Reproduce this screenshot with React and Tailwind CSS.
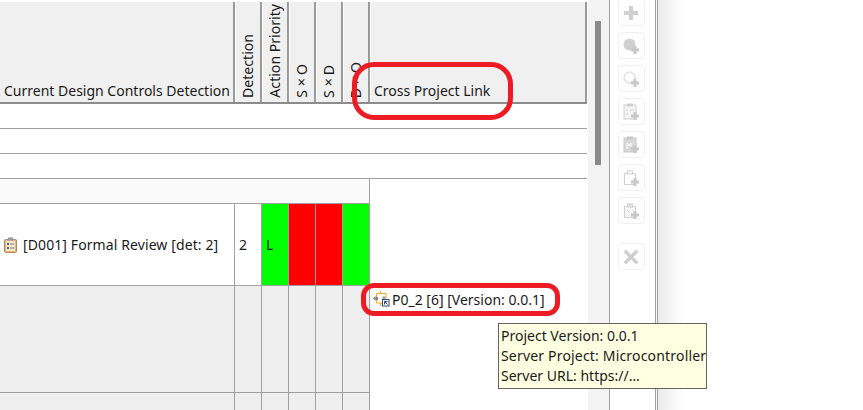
import React from "react";

const font = "font-['Noto_Sans','Open_Sans',sans-serif]";
const lineColor = "border-[#a0a0a0]";

// widths include the 1px right border of each cell
const narrowCols = ["w-[27px]", "w-[27px]", "w-[27px]", "w-[27px]", "w-[27px]"];

function HeaderCell({ label, className = "" }) {
  return (
    <div
      className={`flex items-end border-r-2 border-r-[#9a9a9a] border-l border-l-white ${className}`}
    >
      {label}
    </div>
  );
}

function VerticalLabel({ text, tight }) {
  return (
    <div className="flex h-full w-full items-end justify-center pb-[4px]">
      <span
        className={`rotate-180 whitespace-nowrap text-[14.1px] leading-[20px] text-[#1a1a1a] [writing-mode:vertical-rl] ${
          tight ? "tracking-[-2px]" : ""
        }`}
      >
        {text}
      </span>
    </div>
  );
}

function Header() {
  return (
    <div className="mt-[2px] flex h-[102px] w-[587px] shrink-0 border-b-2 border-b-[#8c8c8c] bg-[#f0f0f0]">
      <HeaderCell
        className="w-[235px] border-l-0 pl-[4px] pb-[1px]"
        label={<span className="whitespace-nowrap text-[14px] leading-[20px] text-[#1a1a1a]">Current Design Controls Detection</span>}
      />
      <HeaderCell className={narrowCols[0]} label={<VerticalLabel text="Detection" />} />
      <HeaderCell className={narrowCols[1]} label={<VerticalLabel text="Action Priority" />} />
      <HeaderCell className={narrowCols[2]} label={<VerticalLabel text="S×O" tight />} />
      <HeaderCell className={narrowCols[3]} label={<VerticalLabel text="S×D" tight />} />
      <HeaderCell className={narrowCols[4]} label={<VerticalLabel text="D×O" tight />} />
      <HeaderCell
        className="flex-1 pl-[3px] pb-[1px]"
        label={<span className="whitespace-nowrap text-[14px] leading-[20px] text-[#1a1a1a]">Cross Project Link</span>}
      />
    </div>
  );
}

function EmptyRow() {
  return <div className={`h-[25px] w-[587px] shrink-0 border-b ${lineColor} bg-white`} />;
}

function ClipboardIcon() {
  return (
    <svg width="13" height="16" viewBox="0 0 13 16" className="shrink-0">
      <rect x="0.5" y="2.5" width="12" height="13" rx="1" fill="#e3b77c" stroke="#b08a58" />
      <rect x="2" y="4" width="9" height="10" fill="#f6e4c8" />
      <rect x="4" y="0.5" width="5" height="3" fill="#8f9bb0" />
      <rect x="3" y="6" width="2" height="2" fill="#44618a" />
      <rect x="3" y="10" width="2" height="2" fill="#44618a" />
      <rect x="6" y="6.5" width="4" height="1" fill="#6d7f9a" />
      <rect x="6" y="10.5" width="4" height="1" fill="#6d7f9a" />
    </svg>
  );
}

function LinkIcon() {
  return (
    <svg width="18" height="16" viewBox="0 0 18 16" className="mt-[-2px] shrink-0">
      <path d="M4.5 2.5h9.5v5M4.5 2.5v9.5h5.5M8.5 0v2.5M8.5 12v3" fill="none" stroke="#f0a818" strokeWidth="1" />
      <path d="M1 7.5l2.5-2.5v5z" fill="#808080" />
      <rect x="3.5" y="6" width="2.5" height="3" fill="#808080" />
      <rect x="10.5" y="5.5" width="3" height="2.5" fill="#9a9a9a" />
      <rect x="10.5" y="8.5" width="6.5" height="6.5" fill="#fff" stroke="#2f4a78" />
      <path d="M12.5 10.5h3M12.5 10.5v3M12.5 10.5l3 3" stroke="#2f4a78" strokeWidth="1" fill="none" />
    </svg>
  );
}

function DetailRow() {
  return (
    <div className="flex h-[82px] shrink-0">
      <div className={`flex w-[370px] border-b ${lineColor} bg-white`}>
        <div className={`flex w-[235px] items-center gap-[6px] border-r ${lineColor} pl-[4px]`}>
          <ClipboardIcon />
          <span className="whitespace-nowrap text-[14px] leading-[20px] tracking-[0.1px] text-[#1a1a1a]">[D001] Formal Review [det: 2]</span>
        </div>
        <div className={`flex w-[27px] items-center border-r ${lineColor} pl-[4px] text-[14px] text-[#1a1a1a]`}>2</div>
        <div className={`flex w-[27px] items-center border-r ${lineColor} bg-[#00ff00] pl-[4px] text-[14px] text-[#1a1a1a]`}>L</div>
        <div className={`w-[27px] border-r ${lineColor} bg-[#ff0000]`} />
        <div className={`w-[27px] border-r ${lineColor} bg-[#ff0000]`} />
        <div className={`w-[27px] border-r ${lineColor} bg-[#00ff00]`} />
      </div>
    </div>
  );
}

function GrayRow({ heightClass, link }) {
  return (
    <div className={`flex shrink-0 ${heightClass}`}>
      <div className={`flex w-[370px] border-b ${lineColor} bg-[#efefef]`}>
        <div className={`w-[235px] border-r ${lineColor}`} />
        {narrowCols.map((w, i) => (
          <div key={i} className={`${w} border-r ${lineColor}`} />
        ))}
      </div>
      {link && (
        <div className="flex h-[28px] items-center gap-[2px] pl-[2px]">
          <LinkIcon />
          <span className="whitespace-nowrap text-[14px] leading-[20px] text-[#1a1a1a]">P0_2 [6] [Version: 0.0.1]</span>
        </div>
      )}
    </div>
  );
}

function ToolButton({ children, className = "" }) {
  return (
    <div className={`flex h-[27px] w-[27px] shrink-0 items-center justify-center rounded-[4px] border border-[#f0f0f0] ${className}`}>
      <svg width="20" height="20" viewBox="0 0 20 20">{children}</svg>
    </div>
  );
}

const Plus = ({ x = 14, y = 14 }) => (
  <path d={`M${x - 1.5} ${y - 4}h3v2.5h2.5v3h-2.5v2.5h-3v-2.5h-2.5v-3h2.5z`} fill="#c8c8c8" />
);

function Toolbar() {
  return (
    <div className="mt-[-1px] flex w-[45px] flex-col items-center gap-[6px] bg-white pr-[3px]">
      <ToolButton>
        <path d="M8 3h4v5h5v4h-5v5H8v-5H3V8h5z" fill="#d0d0d0" />
      </ToolButton>
      <ToolButton>
        <circle cx="8.5" cy="8.5" r="6" fill="#d0d0d0" />
        <Plus />
      </ToolButton>
      <ToolButton>
        <circle cx="8.5" cy="8.5" r="5.5" fill="#fff" stroke="#d0d0d0" />
        <Plus />
      </ToolButton>
      <ToolButton>
        <rect x="3" y="3" width="12" height="14" fill="#f4f4f4" stroke="#d0d0d0" />
        <rect x="6" y="1.5" width="6" height="3" fill="#d0d0d0" />
        <path d="M5 8h2M9 8h4M5 12h2" stroke="#d0d0d0" />
        <Plus />
      </ToolButton>
      <ToolButton>
        <rect x="3" y="3" width="12" height="14" fill="#d8d8d8" stroke="#c8c8c8" />
        <rect x="6" y="1.5" width="6" height="3" fill="#c8c8c8" />
        <path d="M6 14V8l2 3 2-3v4" stroke="#fff" fill="none" />
        <Plus />
      </ToolButton>
      <ToolButton>
        <path d="M3.5 5.5h11v11h-11z" fill="#fff" stroke="#d0d0d0" />
        <rect x="6.5" y="3" width="5" height="3" fill="#fff" stroke="#d0d0d0" />
        <Plus />
      </ToolButton>
      <ToolButton>
        <path d="M3.5 5.5h11v11h-11z" fill="#f6f6f6" stroke="#d0d0d0" />
        <rect x="6.5" y="3" width="5" height="3" fill="#e4e4e4" stroke="#d0d0d0" />
        <path d="M6 9l2 2" stroke="#d0d0d0" />
        <Plus />
      </ToolButton>
      <ToolButton className="mt-[13px]">
        <path d="M5 2.5l5 5 5-5 2.5 2.5-5 5 5 5-2.5 2.5-5-5-5 5-2.5-2.5 5-5-5-5z" fill="#cfcfcf" />
      </ToolButton>
    </div>
  );
}

export default function App() {
  return (
    <div className={`relative flex h-[410px] w-[863px] overflow-hidden bg-white ${font}`}>
      <div className="flex w-[588px] shrink-0 flex-col">
        <Header />
        <EmptyRow />
        <EmptyRow />
        <EmptyRow />
        <div className={`h-[25px] w-[370px] shrink-0 border-b border-r ${lineColor} bg-[#fafafa]`} />
        <DetailRow />
        <GrayRow heightClass="h-[107px]" link />
        <GrayRow heightClass="h-[40px]" />
      </div>

      {/* scrollbar */}
      <div className={`w-[22px] shrink-0 border-r ${lineColor} bg-[#f3f3f3] pl-[7px] pt-[21px]`}>
        <div className="h-[144px] w-[6px] bg-[#8a8a8a]" />
      </div>

      <Toolbar />

      <div className="flex">
        <div className={`w-[3px] border-x ${lineColor} bg-[#f8f8f8]`} />
        <div className="w-[26px] bg-linear-to-r from-[#ebebeb] to-white" />
      </div>

      {/* screenshot annotations */}
      <div className="absolute left-[352px] top-[62px] h-[58px] w-[161px] rounded-[22px] border-[5px] border-[#ed1c24]" />
      <div className="absolute left-[361px] top-[283px] h-[33px] w-[199px] rounded-[13px] border-[5px] border-[#ed1c24]" />

      {/* tooltip */}
      <div className="absolute left-[498px] top-[323px] h-[66px] w-[209px] overflow-hidden whitespace-nowrap border border-[#646464] bg-[#ffffe1] pl-[2px] pt-[2px] text-[14px] leading-[20px] text-[#1a1a1a]">
        <div>Project Version: 0.0.1</div>
        <div className="tracking-[0.18px]">Server Project: Microcontroller-</div>
        <div>Server URL: https://…</div>
      </div>
    </div>
  );
}
